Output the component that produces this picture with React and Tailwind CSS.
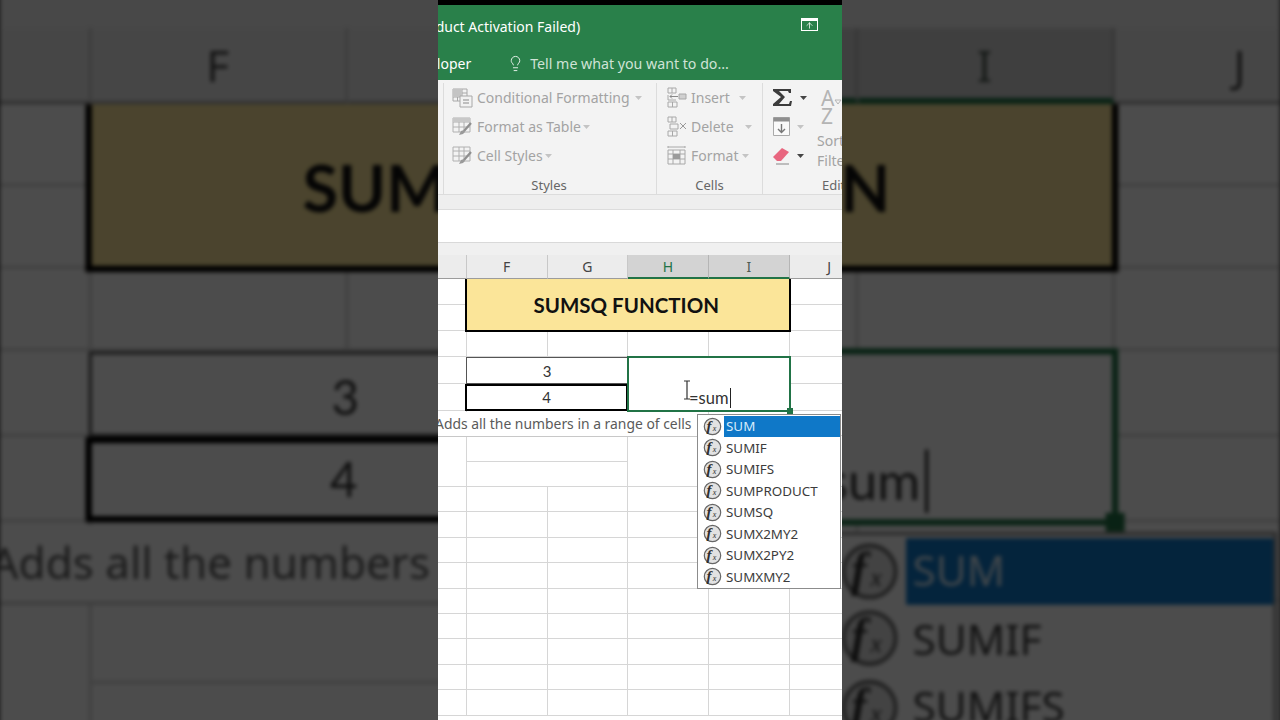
import { ArrowUp, Lightbulb } from "lucide-react";

const LINE = "border-r border-b border-[#d6d6d6]";
const FUNCS = ["SUM", "SUMIF", "SUMIFS", "SUMPRODUCT", "SUMSQ", "SUMX2MY2", "SUMX2PY2", "SUMXMY2"];

function Cell({ className = "" }) {
  return <div className={`${LINE} ${className}`} />;
}

function PlainRow() {
  return (
    <>
      <Cell />
      <Cell />
      <Cell />
      <Cell />
      <Cell />
      <Cell />
    </>
  );
}

function Head({ label, active, faint }) {
  return (
    <div
      className={
        active
          ? `flex items-center justify-center border-r border-r-[#b5b5b5] border-b-2 border-b-[#217346] bg-[#d3d3d3] text-[14px] ${faint ? "text-[#4d5a52]" : "text-[#217346]"}`
          : "flex items-center justify-center border-r border-r-[#c8c8c8] border-b border-b-[#9c9c9c] bg-[#ececec] text-[14px] text-[#444]"
      }
    >
      {label}
    </div>
  );
}

function FxIcon() {
  return (
    <svg width="19" height="19" viewBox="0 0 19 19" className="shrink-0">
      <circle cx="9.5" cy="9.5" r="8.2" fill="#e2e2e2" stroke="#666" strokeWidth="1.2" />
      <text x="3.6" y="14" fontFamily="'Liberation Serif', serif" fontStyle="italic" fontWeight="bold" fontSize="15" fill="#2e2e2e">f</text>
      <text x="9.8" y="14" fontFamily="'Liberation Serif', serif" fontStyle="italic" fontSize="8" fill="#2e2e2e">x</text>
    </svg>
  );
}

function Sheet() {
  return (
    <div className="relative h-[478px] w-[404px] overflow-hidden bg-white font-['Noto_Sans',sans-serif]">
      <div className="h-[13px] border-t border-[#d9d9d9] bg-[#f0f0f0]" />
      <div className="grid grid-cols-[29px_80.5px_80.5px_81px_80.5px_80.5px] grid-rows-[24px_26px_26px_26px_27px_27px_25px_25.5px_25.5px] auto-rows-[25.4px]">
        <Head label="" />
        <Head label="F" />
        <Head label="G" />
        <Head label="H" active />
        <Head label="I" active faint />
        <Head label="J" />

        <Cell />
        <div className="relative z-10 col-span-4 row-span-2 -mb-px -ml-[2px] -mr-px flex items-center justify-center border-x-2 border-b-2 border-black bg-[#fbe599] pr-[3px] pt-[2px] font-['Lato',sans-serif] text-[20.5px] font-bold text-[#111]">
          SUMSQ FUNCTION
        </div>
        <Cell />
        <Cell />
        <Cell />

        <PlainRow />

        <Cell />
        <div className="relative z-10 col-span-2 -ml-px flex items-center justify-center border border-[#555] pt-px font-['Lato',sans-serif] text-[15px] text-[#333]">
          3
        </div>
        <div className="relative z-20 col-span-2 row-span-2 -mb-px -ml-px -mr-px -mt-px flex items-end justify-center border-2 border-[#217346] bg-white font-['Lato',sans-serif] text-[16.5px] text-[#333]">
          <span className="mb-[2px] border-r border-[#222] pl-[2px] pr-px leading-[20px]">=sum</span>
        </div>
        <Cell />

        <Cell />
        <div className="relative z-10 col-span-2 -ml-[2px] flex items-center justify-center border-2 border-black font-['Lato',sans-serif] text-[15px] text-[#333]">
          4
        </div>
        <Cell />

        <Cell />
        <Cell className="col-span-2" />
        <Cell />
        <Cell />
        <Cell />

        <Cell className="row-span-2" />
        <Cell className="col-span-2" />
        <Cell className="row-span-2" />
        <Cell className="row-span-2" />
        <Cell className="row-span-2" />
        <Cell className="col-span-2" />

        <PlainRow />
        <PlainRow />
        <PlainRow />
        <PlainRow />
        <PlainRow />
        <PlainRow />
        <PlainRow />
        <PlainRow />
        <PlainRow />
      </div>

      {/* fill handle */}
      <div className="absolute left-[349px] top-[166px] z-30 h-[6px] w-[6px] bg-[#217346]" />

      {/* mouse cursor */}
      <svg className="absolute left-[245px] top-[138px] z-30" width="9" height="22" viewBox="0 0 9 22">
        <path d="M1 1h6M4 1v18M1 19h6" stroke="#333" strokeWidth="1.2" fill="none" />
      </svg>

      {/* function tooltip */}
      <div className="absolute left-[-3px] top-[170px] z-30 flex h-[25px] w-[262px] items-start whitespace-nowrap border-b border-[#c8c8c8] bg-white pt-[2px] text-[13.9px] leading-[20px] text-[#5a5a5a]">
        Adds all the numbers in a range of cells
      </div>

      {/* autocomplete list */}
      <div className="absolute left-[259px] top-[172px] z-30 w-[144px] border border-[#8c8c8c] bg-white pt-[0.5px] text-[13.4px] text-[#3c3c3c]">
        {FUNCS.map((name, i) => (
          <div key={name} className="flex h-[21.5px] items-center pl-[5px]">
            <FxIcon />
            <span
              className={
                i === 0
                  ? "ml-[2px] flex h-full flex-1 items-center bg-[#0f78c8] pl-[2px] text-[#d6ebfa]"
                  : "ml-[2px] pl-[2px]"
              }
            >
              {name}
            </span>
          </div>
        ))}
      </div>
    </div>
  );
}

function CondIcon() {
  return (
    <svg width="21" height="21" viewBox="0 0 21 21" fill="none" stroke="#a8a8a8">
      <path d="M1 2h14v12H1z M1 6h14M1 10h14M5.5 2v12M10 2v12" />
      <path d="M1 2h9v8H1z" fill="#c4c4c4" stroke="none" />
      <path d="M8 9h12v11H8z" fill="#f2f2f2" />
      <path d="M11 13h6M11 16h6" stroke="#8a8a8a" />
    </svg>
  );
}

function TableIcon({ plain }) {
  return (
    <svg width="21" height="21" viewBox="0 0 21 21" fill="none" stroke="#b0b0b0">
      <path d="M1 2h17v14H1z M1 6h17M1 11h17M7 2v14M12 2v14" />
      {plain ? null : <path d="M1 2h17v4H1z" fill="#c8c8c8" stroke="none" />}
      <path d="M19 7l-7 8" stroke="#8f8f8f" strokeWidth="2.2" />
      <path d="M12 14l-3 1-2 4 4-1 2-2z" fill="#9a9a9a" stroke="none" />
    </svg>
  );
}

function InsertIcon() {
  return (
    <svg width="21" height="21" viewBox="0 0 21 21" fill="none" stroke="#a8a8a8">
      <path d="M2 1h8v5H2z M2 15h9v5H2z M6.5 15v5 M6 1v5" />
      <path d="M13 7h7v5h-7z" fill="#d0d0d0" />
      <path d="M12 9.5H4M6 7.5l-2 2 2 2" stroke="#888" />
      <path d="M2 8v5h8" />
    </svg>
  );
}

function DeleteIcon() {
  return (
    <svg width="21" height="21" viewBox="0 0 21 21" fill="none" stroke="#a8a8a8">
      <path d="M2 1h8v5H2z M2 15h9v5H2z M6.5 15v5 M6 1v5 M4 8h8v5H4z" />
      <path d="M14 7l6 6M20 7l-6 6" stroke="#999" />
    </svg>
  );
}

function FormatIcon() {
  return (
    <svg width="21" height="21" viewBox="0 0 21 21" fill="none" stroke="#a8a8a8">
      <path d="M2 2h17M2 1v2M19 1v2" />
      <path d="M2 5h17v14H2z M2 9h17M2 14h17M7 5v14M14 5v14" />
      <path d="M7 9h7v5H7z" fill="#9a9a9a" stroke="none" />
    </svg>
  );
}

function Caret({ dark }) {
  return (
    <svg width="7" height="4" viewBox="0 0 7 4" className="shrink-0">
      <path d="M0 0h7L3.5 4z" fill={dark ? "#444" : "#c4c4c4"} />
    </svg>
  );
}

function RibbonRow({ icon, label, caretGap = "ml-[5px]" }) {
  return (
    <div className="flex h-[29px] shrink-0 items-center">
      {icon}
      <span className="ml-[4px] whitespace-nowrap text-[14px] text-[#a3a3a3]">{label}</span>
      <span className={caretGap}>
        <Caret />
      </span>
    </div>
  );
}

function Ribbon() {
  return (
    <div className="flex h-[115px] border-b border-[#dcdcdc] bg-[#f3f3f3] pt-[3px] font-['Noto_Sans',sans-serif]">
      <div className="w-[5px]" />
      <div className="flex w-[214px] flex-col border-x border-[#dcdcdc] pl-[8px]">
        <RibbonRow icon={<CondIcon />} label="Conditional Formatting" />
        <RibbonRow icon={<TableIcon />} label="Format as Table" caretGap="ml-[2px]" />
        <RibbonRow icon={<TableIcon plain />} label="Cell Styles" caretGap="ml-[2px]" />
        <div className="mt-[5px] shrink-0 pr-[10px] text-center text-[13px] leading-[20px] text-[#666]">Styles</div>
      </div>
      <div className="flex w-[106px] flex-col border-r border-[#dcdcdc] pl-[9px]">
        <RibbonRow icon={<InsertIcon />} label="Insert" caretGap="ml-[9px]" />
        <RibbonRow icon={<DeleteIcon />} label="Delete" caretGap="ml-[11px]" />
        <RibbonRow icon={<FormatIcon />} label="Format" caretGap="ml-[3px]" />
        <div className="mt-[5px] shrink-0 pr-[9px] text-center text-[13px] leading-[20px] text-[#666]">Cells</div>
      </div>
      <div className="relative flex flex-1 flex-col overflow-hidden pl-[9px]">
        <div className="flex h-[29px] shrink-0 items-center">
          <svg width="21" height="21" viewBox="0 0 21 21">
            <path d="M1 2h18v4h-2l-1-2H7l6 6-6 7h10l1-3h2l-1 5H1v-2l8-7-8-6z" fill="#3c3c3c" />
          </svg>
          <span className="ml-[7px]">
            <Caret dark />
          </span>
        </div>
        <div className="flex h-[29px] shrink-0 items-center">
          <svg width="19" height="21" viewBox="0 0 19 21" fill="none">
            <path d="M1.5 1.5h16v18h-16z" fill="#fafafa" stroke="#aaa" />
            <path d="M1.5 1.5h16v4h-16z" fill="#8f8f8f" />
            <path d="M9.5 8v8M6 13l3.5 3.5L13 13" stroke="#777" strokeWidth="1.4" />
          </svg>
          <span className="ml-[6px]">
            <Caret />
          </span>
        </div>
        <div className="flex h-[29px] shrink-0 items-center">
          <svg width="21" height="21" viewBox="0 0 21 21">
            <path d="M1 12l9-9 7 4-8 9H5z" fill="#e8667f" />
            <path d="M4 19h13" stroke="#999" strokeWidth="1.2" />
          </svg>
          <span className="ml-[4px]">
            <Caret dark />
          </span>
        </div>
        <div className="mt-[5px] shrink-0 pl-[50px] text-[13px] leading-[20px] whitespace-nowrap text-[#666]">Editing</div>

        {/* sort and filter, the ribbon is cut off here */}
        <div className="absolute left-[54px] top-[6px] text-[#b4b4b4]">
          <div className="flex items-end pl-[4px] text-[21px] leading-[18px]">
            A
            <svg width="8" height="6" viewBox="0 0 8 6" fill="none" className="mb-[2px]">
              <path d="M1 1h6L4 5z" stroke="#b4b4b4" />
            </svg>
          </div>
          <div className="pl-[4px] text-[21px] leading-[18px]">Z</div>
          <div className="mt-[6px] text-[14px] leading-[20px] text-[#a3a3a3]">Sort</div>
          <div className="text-[14px] leading-[20px] text-[#a3a3a3]">Filter</div>
        </div>
      </div>
    </div>
  );
}

export default function App() {
  return (
    <div className="relative flex h-[720px] w-[1280px] justify-center overflow-hidden bg-[#4c4c4c]">
      {/* blurred and darkened copy of the video behind it */}
      <div className="absolute inset-0 blur-[2px]">
        <div className="absolute left-0 top-[-13px] w-[404px] origin-top-left scale-[3.168]">
          <Sheet />
        </div>
      </div>
      <div className="absolute inset-0 bg-black/70" />

      <div className="relative flex h-[720px] w-[404px] flex-col overflow-hidden bg-white">
        <div className="h-[5px] bg-black" />
        <div className="h-[75px] bg-[#29804a] font-['Noto_Sans',sans-serif]">
          <div className="flex h-[43px] items-center pr-[24px]">
            <span className="ml-[-29px] whitespace-nowrap text-[14px] text-white">
              (Product Activation Failed)
            </span>
            <div className="mb-[5px] ml-auto flex h-[13px] w-[17px] items-center justify-center border border-white border-t-[3px]">
              <ArrowUp size={9} color="white" strokeWidth={2} />
            </div>
          </div>
          <div className="flex h-[32px] items-start pt-[5px]">
            <span className="ml-[-34px] whitespace-nowrap text-[14px] text-white">Developer</span>
            <Lightbulb size={17} color="#e4efe8" strokeWidth={1.4} className="ml-[36px] mt-[2px]" />
            <span className="ml-[6px] whitespace-nowrap text-[14.2px] text-[#cfe3d6]">
              Tell me what you want to do...
            </span>
          </div>
        </div>
        <Ribbon />
        <div className="h-[15px] border-b border-[#dcdcdc] bg-[#eeeeee]" />
        <div className="h-[32px] bg-white" />
        <Sheet />
      </div>
    </div>
  );
}
